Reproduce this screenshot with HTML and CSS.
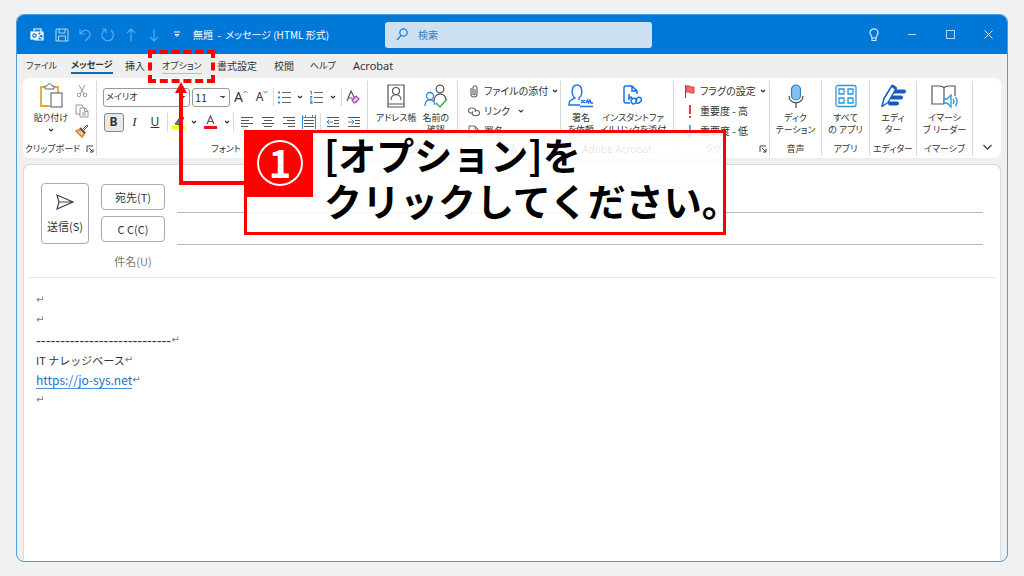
FILE: index.html
```html
<!DOCTYPE html>
<html lang="ja">
<head>
<meta charset="utf-8">
<title>無題 - メッセージ (HTML 形式)</title>
<link rel="stylesheet" href="styles.css">
</head>
<body>
<svg class="defs" aria-hidden="true">
  <symbol id="chev" viewBox="0 0 6 6"><path d="M1 2l2 2 2-2" fill="none" stroke="#333" stroke-width="1.2"/></symbol>
  <symbol id="launch" viewBox="0 0 8 8"><path d="M1 7V1h6M3 3l4 4M7 4v3H4" fill="none" stroke="#444"/></symbol>
</svg>
<div class="window">
  <header class="titlebar">
    <div class="quick">
      <span class="logo"><svg width="14" height="14" viewBox="0 0 14 14" fill="none" stroke="#fff" stroke-width="1.2"><path d="M4 3V1h7v5M8 4h5v8H5v-1M8 8l5 3M8 8l5-3"/><rect x="1" y="4" width="7" height="7" fill="#fff"/><circle cx="4.500" cy="7.500" r="1.700" stroke="#0078d7"/></svg></span>
      <button aria-label="上書き保存"><svg width="14" height="14" viewBox="0 0 14 14" fill="none" stroke="#b5d8f5"><path d="M1 1h11l1 1v11H1zM4 1v4h6V1M3.500 13V8h7v5"/></svg></button>
      <button aria-label="元に戻す"><svg width="14" height="14" viewBox="0 0 14 14" fill="none" stroke="#5ba9e8" stroke-width="1.200"><path d="M2 1v5h5M2 6c2-3 5-5 8-3 3 2 3 5 0 7l-3 3"/></svg></button>
      <button aria-label="やり直し"><svg width="14" height="14" viewBox="0 0 14 14" fill="none" stroke="#5ba9e8" stroke-width="1.200"><path d="M1 1h4v4M5 1.500C1 3-1 8 3 11c3 3 8 2 9-2 1-3 0-5-2-7"/></svg></button>
      <button aria-label="前へ"><svg width="12" height="14" viewBox="0 0 12 14" fill="none" stroke="#5ba9e8" stroke-width="1.200"><path d="M6 13V1M2 5l4-4 4 4"/></svg></button>
      <button aria-label="次へ"><svg width="12" height="14" viewBox="0 0 12 14" fill="none" stroke="#5ba9e8" stroke-width="1.200"><path d="M6 1v12M2 9l4 4 4-4"/></svg></button>
      <button aria-label="カスタマイズ"><svg width="6" height="7" viewBox="0 0 6 7" fill="none" stroke="#fff"><path d="M0 1h6M1 3.500h4L3 5.500z"/></svg></button>
      <span class="title">無題&nbsp; -&nbsp; メッセージ (HTML 形式)</span>
    </div>
    <label class="search"><svg width="12" height="13" viewBox="0 0 12 13" fill="none" stroke="#2b7ec2" stroke-width="1.300"><circle cx="7.500" cy="4.500" r="3.700"/><path d="M5 7.500L1 12"/></svg><input type="search" placeholder="検索" aria-label="検索"></label>
    <div class="winctl">
      <button aria-label="ヒント"><svg width="10" height="14" viewBox="0 0 10 14" fill="none" stroke="#d3e8f9" stroke-width="1.200"><path d="M3 10C3 8 1 7 1 4.800a4 4 0 0 1 8 0C9 7 7 8 7 10zM3 10v2.500h4V10"/></svg></button>
      <button aria-label="最小化"><svg width="8" height="8" viewBox="0 0 8 8" stroke="#b5d8f5"><path d="M0 3.500h8"/></svg></button>
      <button aria-label="最大化"><svg width="9" height="9" viewBox="0 0 9 9" fill="none" stroke="#b5d8f5"><rect x=".5" y=".5" width="8" height="8"/></svg></button>
      <button aria-label="閉じる"><svg width="9" height="9" viewBox="0 0 9 9" stroke="#d3e8f9"><path d="M.5.5l8 8M8.500.5l-8 8"/></svg></button>
    </div>
  </header>

  <nav class="tabs">
    <a href="#" class="kana">ファイル</a><a href="#" class="kana active">メッセージ</a><a href="#">挿入</a><a href="#" class="kana hover">オプション</a><a href="#">書式設定</a><a href="#">校閲</a><a href="#" class="kana">ヘルプ</a><a href="#" class="latin">Acrobat</a>
  </nav>

  <section class="ribbon">
    <div class="group">
      <div class="clip">
        <button class="big paste"><svg width="24" height="26" viewBox="0 0 24 26" fill="none"><path d="M7 4H2v19h9M15 4h4v6" stroke="#e8a33d" stroke-width="1.800"/><path d="M6 6h9V3h-2c-1-3-4-3-5 0H6z" stroke="#666" fill="#fff"/><rect x="12" y="10" width="11" height="14" stroke="#555" fill="#fff"/></svg><span>貼り付け</span><svg class="chev"><use href="#chev"/></svg></button>
        <div class="clip-side">
          <button aria-label="切り取り"><svg width="12" height="14" viewBox="0 0 12 14" fill="none" stroke="#999"><path d="M3 1l5 9M9 1l-5 9"/><circle cx="3" cy="11" r="1.700"/><circle cx="9" cy="11" r="1.700"/></svg></button>
          <button aria-label="コピー"><svg width="14" height="14" viewBox="0 0 14 14" fill="none" stroke="#999"><path d="M5 10H1V1h6l1 1v2M5 4h5l3 3v6H5zM9.500 4v3.500H13M7 9h4M7 11h4"/></svg></button>
          <button aria-label="書式のコピー"><svg width="14" height="14" viewBox="0 0 14 14" fill="none"><path d="M1 7l5-2 4 4-3 4z" fill="#fbc08a" stroke="#e8791c" stroke-width="1.400"/><path d="M5 4l5 5" stroke="#555" stroke-width="2"/><path d="M8 5l4-4 1 1-4 4" stroke="#555"/></svg></button>
        </div>
      </div>
      <div class="glabel"><span>クリップボード</span><svg class="launch"><use href="#launch"/></svg></div>
    </div>

    <div class="group font">
      <div class="row1">
        <select aria-label="フォント"><option>メイリオ</option></select>
        <select aria-label="サイズ" class="size"><option>11</option></select>
        <button class="A">A<svg width="5" height="4" viewBox="0 0 5 4" fill="none" stroke="#2b88d8"><path d="M.5 3l2-2 2 2"/></svg></button>
        <button class="A small">A<svg width="5" height="4" viewBox="0 0 5 4" fill="none" stroke="#2b88d8"><path d="M.5 1l2 2 2-2"/></svg></button>
        <i class="sep"></i>
        <button aria-label="箇条書き"><svg width="13" height="13" viewBox="0 0 13 13"><path d="M4 1.500h9M4 6.500h9M4 11.500h9" stroke="#666"/><path d="M0 1.500h2M0 6.500h2M0 11.500h2" stroke="#2b88d8" stroke-width="2.200"/></svg></button>
        <svg class="chev"><use href="#chev"/></svg>
        <button aria-label="段落番号"><svg width="13" height="13" viewBox="0 0 13 13" fill="none"><path d="M4 1.500h9M4 6.500h9M4 11.500h9" stroke="#666"/><path d="M0 .5h1.500v3M0 5.500h2L0 8h2M0 10h2v3H0M0 11.500h2" stroke="#2b88d8"/></svg></button>
        <svg class="chev"><use href="#chev"/></svg>
        <i class="sep"></i>
        <button aria-label="書式のクリア"><svg width="14" height="14" viewBox="0 0 14 14" fill="none"><path d="M1 11L5 1l4 8M2.500 8h4" stroke="#555" stroke-width="1.200"/><path d="M6 10l4-4 3 3-4 4H8z" stroke="#9b45b8" fill="#e6c6ef" stroke-width="1.200"/></svg></button>
      </div>
      <div class="row2">
        <button class="bold">B</button><button class="ital">I</button><button class="under">U</button>
        <i class="sep"></i>
        <button aria-label="蛍光ペン"><svg width="14" height="14" viewBox="0 0 14 14"><path d="M3 9l6-8 3 2-5 7z" fill="#777" stroke="#555"/><path d="M0 12.500h13" stroke="#ff0" stroke-width="3"/></svg></button>
        <svg class="chev"><use href="#chev"/></svg>
        <button aria-label="フォントの色"><svg width="13" height="14" viewBox="0 0 13 14" fill="none"><path d="M3 9l3.500-8L10 9M4.200 6.500h4.600" stroke="#555" stroke-width="1.200"/><path d="M0 12.500h13" stroke="#f01010" stroke-width="3"/></svg></button>
        <svg class="chev"><use href="#chev"/></svg>
        <i class="sep"></i>
        <button aria-label="左揃え"><svg width="12" height="13" viewBox="0 0 12 13" stroke="#555"><path d="M0 1.500h12M0 4.500h8M0 7.500h12M0 10.500h7"/></svg></button>
        <button aria-label="中央揃え"><svg width="12" height="13" viewBox="0 0 12 13" stroke="#555"><path d="M0 1.500h12M2 4.500h8M0 7.500h12M2 10.500h8"/></svg></button>
        <button aria-label="右揃え"><svg width="12" height="13" viewBox="0 0 12 13" stroke="#555"><path d="M0 1.500h12M4 4.500h8M0 7.500h12M5 10.500h7"/></svg></button>
        <button aria-label="均等割り付け"><svg width="14" height="14" viewBox="0 0 14 14" stroke="#2b88d8"><path d="M1 2.500h12M.5 0v14M13.500 0v14M3.500 0v3M10.500 0v3"/><path d="M2 5.500h10M2 8.500h10M2 11.500h10" stroke="#555"/></svg></button>
        <i class="sep"></i>
        <button aria-label="インデント解除"><svg width="12" height="13" viewBox="0 0 12 13" fill="none" stroke="#555"><path d="M0 1.500h12M7 4.500h5M7 7.500h5M0 10.500h12"/><path d="M6 6H0M2.500 3.500L0 6l2.500 2.500" stroke="#2b88d8"/></svg></button>
        <button aria-label="インデント"><svg width="12" height="13" viewBox="0 0 12 13" fill="none" stroke="#555"><path d="M0 1.500h12M7 4.500h5M7 7.500h5M0 10.500h12"/><path d="M0 6h6M3.500 3.500L6 6 3.500 8.500" stroke="#2b88d8"/></svg></button>
      </div>
      <div class="glabel">フォント</div>
    </div>

    <div class="group">
      <div class="bigs">
        <button class="big"><svg width="18" height="24" viewBox="0 0 18 24" fill="none" stroke="#555" stroke-width="1.200"><path d="M1 1h16v22H1zM1 20h16"/><circle cx="9" cy="7" r="3.500"/><path d="M4 16c0-7 10-7 10 0"/></svg><span>アドレス帳</span></button>
        <button class="big"><svg width="24" height="24" viewBox="0 0 24 24" fill="none" stroke-width="1.300"><g stroke="#555"><circle cx="16" cy="5" r="3.800"/><path d="M10 17c0-9 12-9 12-1"/></g><g stroke="#2b88d8"><circle cx="6" cy="12" r="3.500" fill="#fff"/><path d="M1 22c0-8 9-8 10-1"/></g><path d="M12 19l4 4 7-8" stroke="#3bab55" stroke-width="1.500"/></svg><span>名前の<br>確認</span></button>
      </div>
      <div class="glabel">名前</div>
    </div>

    <div class="group">
      <div class="list">
        <button><svg width="12" height="13" viewBox="0 0 12 13" fill="none" stroke="#666" stroke-width="1.200"><path d="M3 3v6c0 4 6 4 6 0V3c0-3-4-3-4 0v6c0 1 2 1 2 0V4"/></svg><span>ファイルの添付</span><svg class="chev"><use href="#chev"/></svg></button>
        <button class="link"><svg width="12" height="13" viewBox="0 0 12 13" fill="none" stroke="#666" stroke-width="1.200"><path d="M5 8H3a2.500 2.500 0 0 1 0-5h2a2.500 2.500 0 0 1 2 4"/><path d="M7 5.500h2a2.300 2.300 0 0 1 0 5H7a2.300 2.300 0 0 1-2-4"/></svg><span>リンク</span><svg class="chev"><use href="#chev"/></svg></button>
        <button><svg width="12" height="13" viewBox="0 0 12 13" fill="none" stroke="#666"><path d="M6 12H1V1h6l3 3v2M7 1v3h3"/><path d="M6 10l5-4" stroke="#2b88d8" stroke-width="2"/></svg><span>署名</span></button>
      </div>
      <div class="glabel">挿入</div>
    </div>

    <div class="group">
      <div class="bigs">
        <button class="big"><svg width="26" height="24" viewBox="0 0 26 24" fill="none" stroke="#1473e6" stroke-width="1.400"><path d="M12 21H1c0-5 2-5 6-7C3 11 3 1 9 1s6 10 2 13v2M12 22.500h13M13 16l4 3m0-3l-4 3M18 19l1.500-3 1 3 1.500-3 1 3h2"/></svg><span>署名<br>を依頼</span></button>
        <button class="big"><svg width="20" height="22" viewBox="0 0 20 22" fill="none" stroke="#1473e6" stroke-width="1.500"><path d="M7 18H3c-1 0-2-1-2-2V3c0-1 1-2 2-2h6l5 5v3M9 1v5h5M6 9v5l2-2 2 2"/><path d="M9 18c-3-3 2-6 4-4s-2 7-4 4zM13 15c2-5 7-2 5 1s-6 3-5 0z"/></svg><span>インスタントファ<br>イルリンクを添付</span></button>
      </div>
      <div class="glabel latin">Adobe Acrobat</div>
    </div>

    <div class="group">
      <div class="list">
        <button><svg width="12" height="13" viewBox="0 0 12 13"><path d="M1.500 0v13" stroke="#555"/><path d="M2 1h4v1h4v6H6V7H2z" fill="#f36a6a" stroke="#d84040"/></svg><span>フラグの設定</span><svg class="chev"><use href="#chev"/></svg></button>
        <button><svg width="12" height="13" viewBox="0 0 12 13"><path d="M6 0v9M6 11v2" stroke="#ee3a3a" stroke-width="2"/></svg><span>重要度 - 高</span></button>
        <button><svg width="12" height="13" viewBox="0 0 12 13" fill="none" stroke="#2b88d8" stroke-width="1.500"><path d="M6 0v12M3 9l3 3 3-3"/></svg><span>重要度 - 低</span></button>
      </div>
      <div class="glabel"><span class="grow">タグ</span><svg class="launch"><use href="#launch"/></svg></div>
    </div>

    <div class="group">
      <button class="big"><svg width="16" height="24" viewBox="0 0 16 24" fill="none"><rect x="3.500" y="1" width="9" height="15" rx="4.500" fill="#83c0ee" stroke="#2b7ec2" stroke-width="1.200"/><path d="M1 12c0 9 14 9 14 0M8 19v5" stroke="#555" stroke-width="1.300"/></svg><span>ディク<br>テーション</span></button>
      <div class="glabel">音声</div>
    </div>
    <div class="group">
      <button class="big"><svg width="22" height="23" viewBox="0 0 22 23" fill="none" stroke="#2b98d8" stroke-width="1.300"><rect x="1" y="1" width="20" height="21" rx="2"/><path d="M4 4.500h5v5H4zM13 4.500h5v5h-5zM4 13.500h5v5H4zM13 13.500h5v5h-5z"/></svg><span>すべて<br>の アプリ</span></button>
      <div class="glabel">アプリ</div>
    </div>
    <div class="group">
      <button class="big"><svg width="26" height="25" viewBox="0 0 26 25" stroke-linejoin="round"><path d="M14 8h10M12 14h9M10 20h7" stroke="#185abd" stroke-width="4" stroke-linecap="round"/><path d="M2 23l2-8L12 2l4 3L8 19z" fill="#fff" stroke="#185abd" stroke-width="1.500"/><path d="M11 3l2-2 4 3-1 3z" fill="#185abd"/></svg><span>エディ<br>ター</span></button>
      <div class="glabel">エディター</div>
    </div>
    <div class="group">
      <button class="big"><svg width="28" height="24" viewBox="0 0 28 24" fill="none"><path d="M13 20V4C12 2 10 2 8 2H1v18h12M13 4c1-2 3-2 5-2h6v10" stroke="#555" stroke-width="1.200"/><path d="M13 15h3l4-4v12l-4-4h-3z" fill="#fff" stroke="#2b98d8" stroke-width="1.300"/><path d="M22 15q2 2.500 0 5M24.500 13q3 4 0 9" stroke="#2b98d8" stroke-width="1.300"/></svg><span>イマーシ<br>ブ リーダー</span></button>
      <div class="glabel">イマーシブ</div>
    </div>
    <div class="collapse"><button aria-label="リボンを折りたたむ"><svg width="9" height="6" viewBox="0 0 9 6" fill="none" stroke="#444" stroke-width="1.300"><path d="M.5 1l4 4 4-4"/></svg></button></div>
  </section>

  <main class="compose">
    <form class="fields">
      <button type="button" class="send"><svg width="18" height="16" viewBox="0 0 18 16" fill="none" stroke="#444" stroke-width="1.200"><path d="M1 1l16 7L1 15l2-7zM3 8h14"/></svg><span>送信(S)</span></button>
      <button type="button" class="to">宛先(T)</button><input type="text" aria-label="宛先">
      <button type="button" class="to">C C(C)</button><input type="text" aria-label="C C">
      <label for="subject">件名(U)</label><input type="text" id="subject" class="subject">
    </form>
    <article class="body">
      <p><i>↵</i></p>
      <p><i>↵</i></p>
      <p><span class="rule">----------------------------</span><i>↵</i></p>
      <p>IT ナレッジベース<i>↵</i></p>
      <p><a href="https://jo-sys.net">https://jo-sys.net</a><i>↵</i></p>
      <p><i>↵</i></p>
    </article>
  </main>
</div>

<div class="mark"></div>
<svg class="arrow" width="70" height="104" viewBox="0 0 70 104"><path d="M6 10v91h64" fill="none" stroke="#f00" stroke-width="4"/><path d="M6 0l6 11H0z" fill="#f00"/></svg>
<aside class="callout">
  <div class="num"><span>1</span></div>
  <p>[オプション]を<br>クリックしてください。</p>
</aside>
</body>
</html>
```
FILE: styles.css
```css
* { box-sizing: border-box; }
body {
  margin: 0;
  min-height: 100vh;
  padding: 14px 16px;
  display: flex;
  background: #f1f1f1;
  color: #333;
  font: 10px/12px "Noto Sans CJK JP", sans-serif;
  font-feature-settings: "palt";
}
.defs { position: absolute; width: 0; height: 0; }
button, input, select { font: inherit; font-feature-settings: inherit; color: inherit; }
button { background: none; border: 0; padding: 0; display: flex; align-items: center; justify-content: center; }
svg { flex: none; display: block; }
a { color: inherit; text-decoration: none; }
.chev { width: 6px; height: 6px; }
.launch { width: 8px; height: 8px; }

.window {
  flex: 1;
  display: flex;
  flex-direction: column;
  border: 1px solid #4a9fe0;
  border-radius: 8px;
  background: #efefef;
  overflow: hidden;
}
.titlebar { display: grid; grid-template-columns: 368px 267px 1fr; align-items: center; height: 39px; background: #0078d7; color: #fff; }
.quick { display: flex; align-items: center; padding-left: 7px; }
.quick button { width: 23px; height: 24px; }
.logo { width: 26px; display: flex; justify-content: center; }
.title { margin-left: 5px; white-space: nowrap; }
.search { display: flex; align-items: center; gap: 10px; height: 26px; padding-left: 11px; background: #cde1f3; border-radius: 3px; }
.search input { flex: 1; min-width: 0; border: 0; padding: 0; background: none; outline: 0; }
.search input::placeholder { color: #2b7ec2; opacity: 1; }
.winctl { display: flex; justify-content: flex-end; }
.winctl button { width: 38px; height: 24px; }

.tabs { display: grid; grid-template-columns: 45px 54px 37px 55px 57px 36px 43px 1fr; justify-items: start; align-items: center; height: 24px; padding-left: 9px; }
.tabs a { padding: 1px 0; border-bottom: 1px solid transparent; white-space: nowrap; }
.tabs .kana { font-size: 9px; }
.tabs .active { font-weight: 700; border-bottom: 2px solid #0f6cbd; }
.tabs .hover { border-bottom-color: #bbb; }
.tabs .latin { font-family: "Noto Sans", sans-serif; font-size: 11px; }

.ribbon {
  display: grid;
  grid-template-columns: 74px 271px 90px 103px 113px 96px 52px 48px 47px 56px 1fr;
  margin: 0 6px;
  padding: 3px 0 2px;
  height: 80px;
  background: #fff;
  border-radius: 7px;
}
.group { display: flex; flex-direction: column; justify-content: space-between; align-items: stretch; border-right: 1px solid #d8d8d8; }
.glabel { display: flex; justify-content: center; align-items: center; gap: 6px; height: 14px; white-space: nowrap; font-size: 9px; }
.glabel.latin { font-family: "Noto Sans", sans-serif; font-size: 10px; }
.grow { flex: 1; text-align: center; }
.grow + .launch { margin-right: 2px; }
.big { flex-direction: column; justify-content: flex-start; text-align: center; white-space: nowrap; padding-top: 2px; font-size: 9px; }
.big > svg:first-child { height: 26px; }
.big span { margin-top: 3px; }
.clip { display: flex; padding-left: 10px; gap: 6px; }
.paste { width: 36px; }
.paste .chev { margin-top: 3px; }
.clip-side { display: flex; flex-direction: column; gap: 6px; padding-top: 3px; }
.row1, .row2 { display: grid; align-items: center; justify-items: center; padding-left: 6px; height: 24px; }
.row1 { grid-template-columns: 89px 38px 22px 20px 2px 21px 10px 23px 10px 6px 18px; margin-top: 4px; }
.row2 { grid-template-columns: 21px 21px 20px 4px 20px 10px 23px 9px 5px 21px 21px 21px 20px 3px 21px 21px; margin-top: 1px; }
.font { justify-content: flex-start; }
.font .glabel { margin-top: auto; padding-right: 12px; }
.sep { width: 1px; height: 18px; background: #d8d8d8; }
.row1 select {
  justify-self: start;
  width: 87px;
  height: 19px;
  padding: 0 2px;
  border: 1px solid #999;
  border-radius: 3px;
  appearance: none;
  font-size: 9px;
  background: linear-gradient(45deg, transparent 50%, #555 50%) right 6px center / 3px 3px no-repeat, linear-gradient(-45deg, transparent 50%, #555 50%) right 3px center / 3px 3px no-repeat, #fff;
}
.row1 .size { width: 38px; font-size: 11px; }
.A { font: 14px/14px "Noto Sans", sans-serif; align-items: flex-start; }
.small { font-size: 12px; }
.bold { width: 20px; height: 19px; border: 1px solid #888; border-radius: 3px; background: #e8e8e8; font: 700 12px/14px "Noto Sans", sans-serif; }
.ital { font: italic 13px/14px "Liberation Serif", serif; }
.under { font: 12px/14px "Noto Sans", sans-serif; text-decoration: underline; }
.bigs { display: flex; justify-content: center; gap: 6px; }
.list { display: flex; flex-direction: column; padding-left: 10px; }
.list button { justify-content: flex-start; gap: 4px; height: 20px; white-space: nowrap; }
.list .link .chev { margin-left: 4px; }
.collapse { display: flex; align-items: flex-end; justify-content: center; padding-bottom: 6px; }

.compose { flex: 1; margin: 6px 6px 0; border: 1px solid #d8d8d8; border-bottom: 0; border-radius: 7px 7px 0 0; background: #fff; }
.fields {
  display: grid;
  grid-template-columns: 48px 64px 1fr;
  grid-template-rows: 32px 32px 32px;
  column-gap: 12px;
  align-items: center;
  margin: 0 5px;
  padding: 16px 12px 0;
  border-bottom: 1px solid #e2e2e2;
}
.send { grid-row: 1 / 3; height: 61px; flex-direction: column; gap: 10px; border: 1px solid #aaa; border-radius: 4px; font-size: 11px; }
.to { height: 26px; border: 1px solid #aaa; border-radius: 4px; font-size: 11px; }
.fields label { grid-column: 2; text-align: center; color: #777; font-size: 11px; }
.fields input { width: 100%; height: 32px; border: 0; border-bottom: 1px solid #bbb; outline: 0; background: none; }
.fields .subject { border: 0; height: 28px; }
.body { padding: 12px 12px; font-size: 11px; line-height: 20px; font-feature-settings: normal; }
.body p { margin: 0; height: 20px; display: flex; align-items: center; white-space: nowrap; }
.body i { font: 10px/20px "DejaVu Sans", sans-serif; color: #777; }
.rule { font: 15px/20px "Open Sans", sans-serif; }
.body a { color: #1a6fc9; font-size: 12px; line-height: 16px; border-bottom: 1px solid #4a90d9; }

.mark { position: absolute; left: 148px; top: 50px; width: 67px; height: 33px; border: 4px dashed #f00; }
.arrow { position: absolute; left: 175px; top: 82px; }
.callout {
  position: absolute;
  left: 244px;
  top: 130px;
  width: 482px;
  height: 105px;
  display: flex;
  gap: 11px;
  border: 3px solid #f00;
  background: rgba(255, 255, 255, .88);
  color: #000;
  font-feature-settings: normal;
}
.num { flex: none; display: flex; align-items: center; justify-content: center; width: 66px; height: 64px; padding-bottom: 4px; background: #f00; }
.num span { width: 46px; height: 46px; border: 2px solid #fff; border-radius: 50%; color: #fff; text-align: center; font-size: 38px; line-height: 40px; font-weight: 700; }
.callout p { margin: -2px 0 0; white-space: nowrap; font-size: 38px; line-height: 46px; font-weight: 700; }
```
